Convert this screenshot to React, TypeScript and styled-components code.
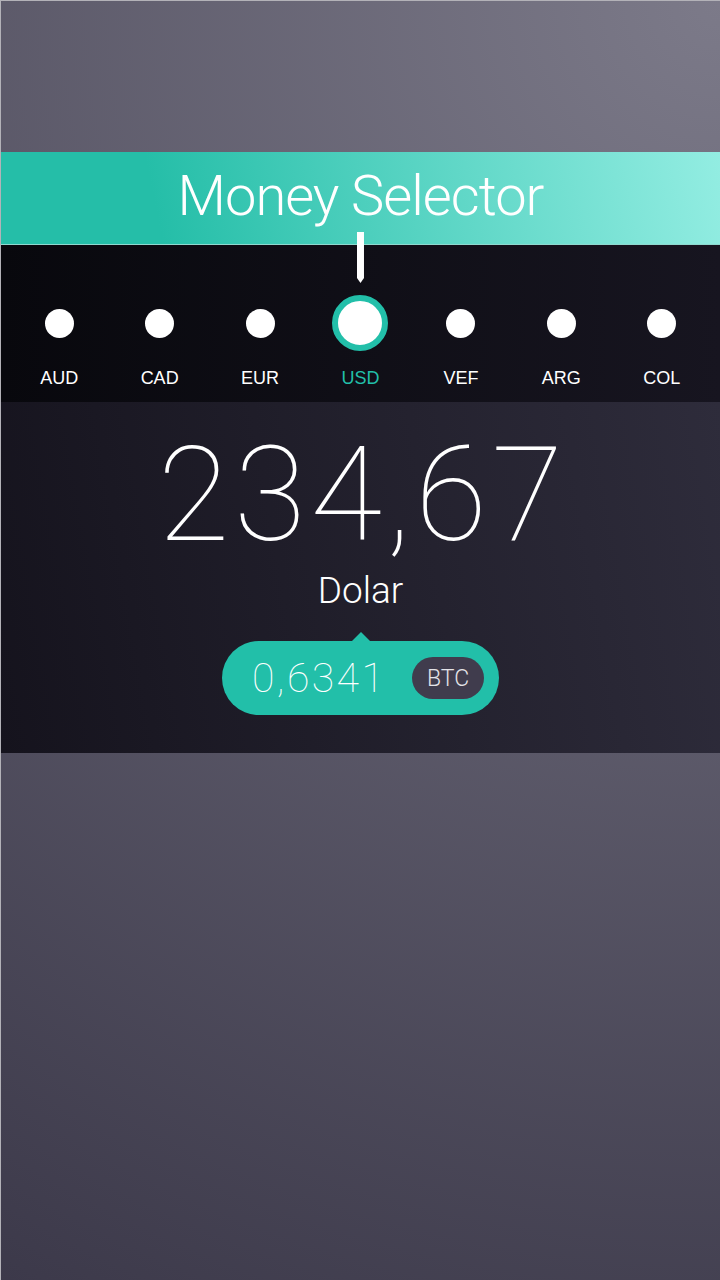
import React from "react";
import styled, { createGlobalStyle } from "styled-components";

const Global = createGlobalStyle`
  html, body { margin: 0; padding: 0; }
  body { font-family: "Liberation Sans", Arial, sans-serif; }
`;

const Screen = styled.div`
  width: 720px;
  height: 1280px;
  box-sizing: border-box;
  border-left: 1px solid #b3b2b8;
  border-top: 1px solid #b3b2b8;
  background: radial-gradient(circle farthest-corner at 100% 0%, #7c7a89 0%, #3c394a 100%);
  display: flex;
  flex-direction: column;
  overflow: hidden;
`;

const TopSpace = styled.div`
  height: 151px;
  flex: none;
`;

const Header = styled.header`
  height: 92px;
  flex: none;
  border-bottom: 1px solid #8fd9cf;
  background: linear-gradient(78deg, #25bea8 22%, #93ede2 100%);
  display: flex;
  align-items: center;
  justify-content: center;
`;

const Title = styled.h1`
  margin: 0;
  font-family: "Roboto", "Liberation Sans", sans-serif;
  font-weight: 300;
  font-size: 56px;
  letter-spacing: -1px;
  color: #ffffff;
  line-height: 1;
  transform: translateY(-2px);
`;

const Selector = styled.nav`
  position: relative;
  height: 157px;
  flex: none;
  box-sizing: border-box;
  padding: 50px 8px 0;
  background: linear-gradient(to right, #08080d, #171520);
  display: grid;
  grid-template-columns: repeat(7, 1fr);
  align-items: start;
`;

const Item = styled.div`
  position: relative;
  display: flex;
  flex-direction: column;
  align-items: center;
  gap: 17px;
`;

const DotSlot = styled.div`
  height: 56px;
  display: flex;
  align-items: center;
  justify-content: center;
`;

const Dot = styled.div<{ $active?: boolean }>`
  box-sizing: border-box;
  border-radius: 50%;
  background: #ffffff;
  width: ${(p) => (p.$active ? "56px" : "29px")};
  height: ${(p) => (p.$active ? "56px" : "29px")};
  border: ${(p) => (p.$active ? "6px solid #22bfa9" : "none")};
`;

const Label = styled.span<{ $active?: boolean }>`
  font-family: "Liberation Sans", Arial, sans-serif;
  font-size: 18px;
  line-height: 20px;
  color: ${(p) => (p.$active ? "#22bfa9" : "#ffffff")};
`;

const Pointer = styled.div`
  position: absolute;
  left: 50%;
  top: -63px;
  width: 7px;
  height: 51px;
  margin-left: -3.5px;
  background: #ffffff;
  clip-path: polygon(0 0, 100% 0, 100% 90%, 50% 100%, 0 90%);
`;

const Display = styled.section`
  height: 351px;
  flex: none;
  background: linear-gradient(80deg, #15131d, #2e2c3b);
  display: flex;
  flex-direction: column;
  align-items: center;
`;

const Amount = styled.div`
  font-family: "Roboto", "Liberation Sans", sans-serif;
  font-weight: 100;
  font-size: 131px;
  line-height: 1;
  color: #ffffff;
  margin-top: 28px;
  letter-spacing: 4.5px;
  padding-left: 4.5px;
`;

const Currency = styled.div`
  font-family: "Roboto", "Liberation Sans", sans-serif;
  font-weight: 300;
  font-size: 37px;
  line-height: 1;
  color: #ffffff;
  margin-top: 11px;
`;

const Pill = styled.div`
  position: relative;
  margin-top: 32px;
  width: 277px;
  height: 74px;
  box-sizing: border-box;
  border-radius: 37px;
  background: #22bfa9;
  display: flex;
  align-items: center;
  justify-content: space-between;
  padding: 0 15px 0 30px;
  &::before {
    content: "";
    position: absolute;
    left: 50%;
    top: -9px;
    margin-left: -10px;
    border-left: 10px solid transparent;
    border-right: 10px solid transparent;
    border-bottom: 10px solid #22bfa9;
  }
`;

const Converted = styled.span`
  font-family: "Roboto", "Liberation Sans", sans-serif;
  font-weight: 100;
  font-size: 41px;
  line-height: 1;
  letter-spacing: 2.4px;
  color: #ffffff;
`;

const Badge = styled.span`
  width: 72px;
  height: 42px;
  border-radius: 21px;
  background: #403c4d;
  color: #e4e3e8;
  font-family: "Roboto", "Liberation Sans", sans-serif;
  font-weight: 300;
  font-size: 23px;
  display: flex;
  align-items: center;
  justify-content: center;
`;

const currencies = ["AUD", "CAD", "EUR", "USD", "VEF", "ARG", "COL"];

export default function App() {
  return (
    <>
      <Global />
      <Screen>
        <TopSpace />
        <Header>
          <Title>Money Selector</Title>
        </Header>
        <Selector>
          {currencies.map((c) => {
            const active = c === "USD";
            return (
              <Item key={c}>
                {active && <Pointer />}
                <DotSlot>
                  <Dot $active={active} />
                </DotSlot>
                <Label $active={active}>{c}</Label>
              </Item>
            );
          })}
        </Selector>
        <Display>
          <Amount>234,67</Amount>
          <Currency>Dolar</Currency>
          <Pill>
            <Converted>0,6341</Converted>
            <Badge>BTC</Badge>
          </Pill>
        </Display>
      </Screen>
    </>
  );
}
